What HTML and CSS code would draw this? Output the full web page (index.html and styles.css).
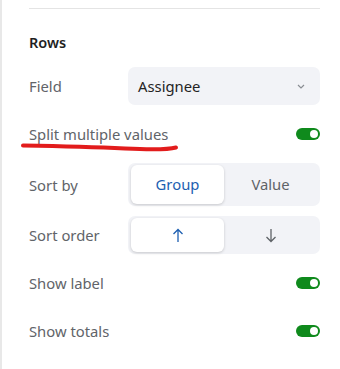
FILE: index.html
```html
<!DOCTYPE html>
<html lang="en">
<head>
    <meta charset="UTF-8">
    <meta name="viewport" content="width=device-width, initial-scale=1.0">
    <title>Rows settings</title>
    <link rel="stylesheet" href="styles.css">
</head>
<body>
<div class="panel">
    <div class="divider"></div>
    <h3 class="section-title">Rows</h3>
    <div class="rows">
        <div class="row">
            <span class="label">Field</span>
            <div class="select">
                <span>Assignee</span>
                <svg class="chevron" width="8" height="5" viewBox="0 0 8 5"><path d="M1 1 L4 4 L7 1" fill="none" stroke="#8a8d93" stroke-width="1.2"/></svg>
            </div>
        </div>
        <div class="row">
            <span class="label">Split multiple values</span>
            <span class="toggle"><span class="knob"></span></span>
        </div>
        <div class="row">
            <span class="label">Sort by</span>
            <div class="segmented">
                <button class="seg active">Group</button>
                <button class="seg">Value</button>
            </div>
        </div>
        <div class="row">
            <span class="label">Sort order</span>
            <div class="segmented">
                <button class="seg active icon">
                    <svg width="12" height="15" viewBox="0 0 12 15"><path d="M6 14 V1.5 M1.5 6 L6 1.5 L10.5 6" fill="none" stroke="currentColor" stroke-width="1.3"/></svg>
                </button>
                <button class="seg icon">
                    <svg width="12" height="15" viewBox="0 0 12 15"><path d="M6 1 V13.5 M1.5 9 L6 13.5 L10.5 9" fill="none" stroke="currentColor" stroke-width="1.3"/></svg>
                </button>
            </div>
        </div>
        <div class="row">
            <span class="label">Show label</span>
            <span class="toggle"><span class="knob"></span></span>
        </div>
        <div class="row">
            <span class="label">Show totals</span>
            <span class="toggle"><span class="knob"></span></span>
        </div>
    </div>
    <svg class="scribble" width="340" height="369" viewBox="0 0 340 369">
        <path d="M23 145.5 Q 85 146.5 125 148.5 T 176 147.5" fill="none" stroke="#e21c1c" stroke-width="4" stroke-linecap="round"/>
    </svg>
</div>
</body>
</html>
```

FILE: styles.css
```css
body {
    margin: 0;
    background: #fff;
    font-family: "Noto Sans", "Open Sans", sans-serif;
    font-size: 14.8px;
}

.panel {
    position: relative;
    height: 369px;
    box-sizing: border-box;
    border-left: 2px solid #e8e8e8;
    padding: 8px 20px 0 27px;
}

.divider {
    height: 1px;
    background-color: #e4e4e4;
}

.section-title {
    margin: 23px 0 15px;
    font-size: 14.5px;
    line-height: 20px;
    font-weight: 600;
    color: #1f1f1f;
}

.rows {
    display: flex;
    flex-direction: column;
    gap: 10px;
}

.row {
    display: flex;
    align-items: center;
    justify-content: space-between;
    min-height: 38px;
}

.label {
    color: #616469;
    line-height: 20px;
}

.select {
    display: flex;
    align-items: center;
    justify-content: space-between;
    width: 192px;
    height: 38px;
    box-sizing: border-box;
    padding: 0 15px 0 10px;
    background-color: #f2f3f7;
    border-radius: 7px;
    color: #242424;
}

.segmented {
    display: grid;
    grid-template-columns: 1fr 1fr;
    width: 192px;
    box-sizing: border-box;
    padding: 2px 3px;
    background-color: #f2f3f7;
    border-radius: 7px;
}

.seg {
    padding: 9px 0 10px;
    border: none;
    background: transparent;
    font-family: inherit;
    font-size: 14.8px;
    line-height: 20px;
    color: #5f6368;
    border-radius: 6px;
}

.seg.active {
    background-color: #fff;
    color: #1d5fb1;
    box-shadow: 0 1px 3px rgba(0, 0, 0, 0.18);
}

.seg.icon {
    display: flex;
    justify-content: center;
    padding: 10px 0 9px;
}

.seg.icon svg {
    display: block;
}

.toggle {
    display: flex;
    justify-content: flex-end;
    align-items: center;
    width: 24px;
    height: 12px;
    box-sizing: border-box;
    padding: 0 2px;
    background-color: #0f8a1c;
    border-radius: 6px;
}

.knob {
    width: 8px;
    height: 8px;
    border-radius: 50%;
    background-color: #fff;
}

.scribble {
    position: absolute;
    top: 0;
    left: -2px;
    pointer-events: none;
}
```
